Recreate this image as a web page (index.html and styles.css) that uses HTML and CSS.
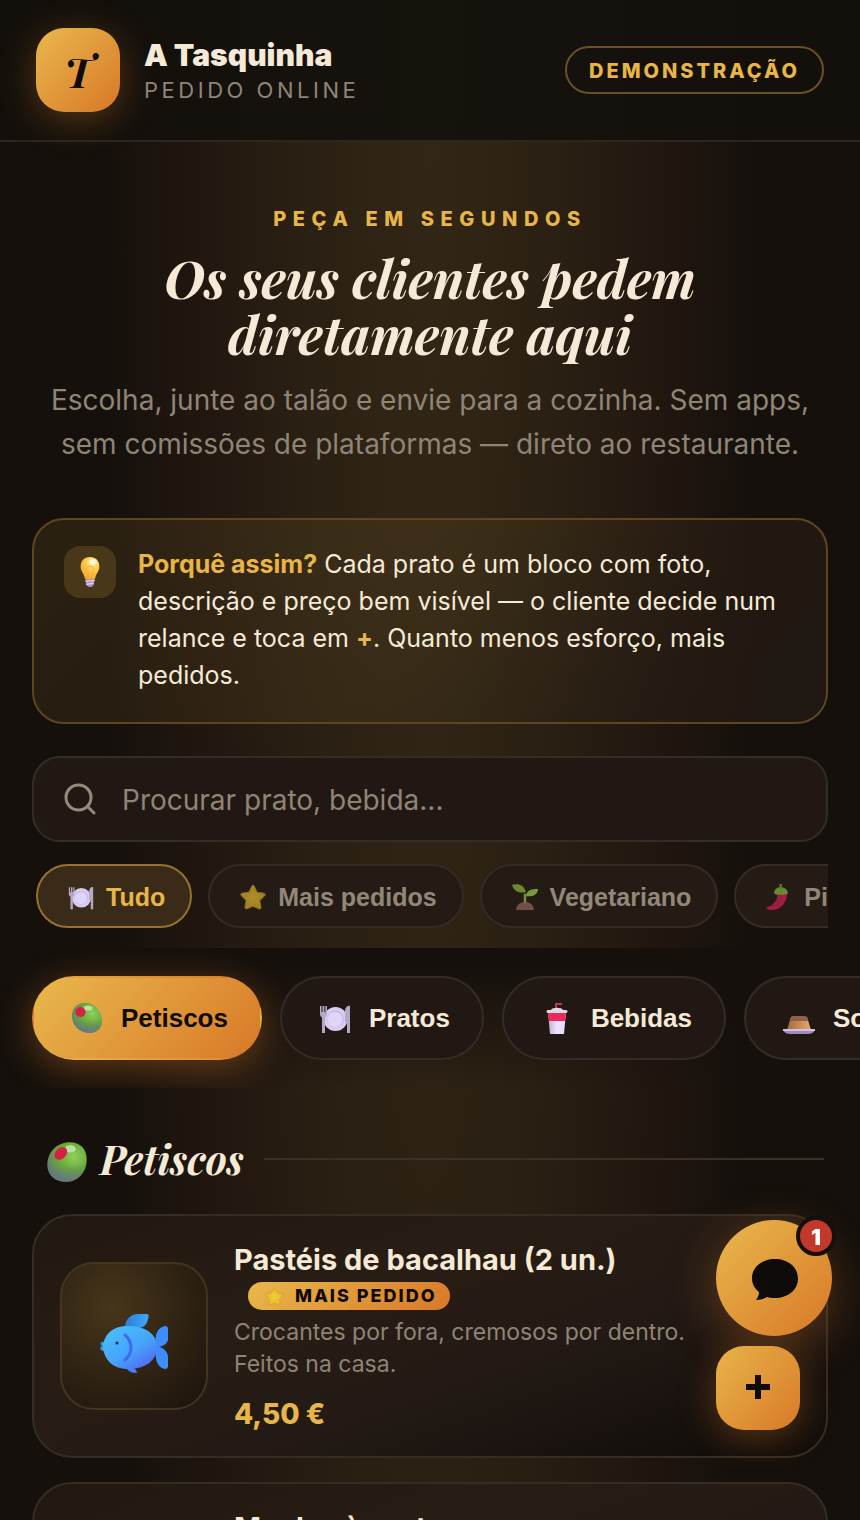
FILE: index.html
```html
<!DOCTYPE html>
<html lang="pt">
<head>
<meta charset="utf-8">
<meta name="viewport" content="width=device-width, initial-scale=1">
<title>A Tasquinha — Pedido online</title>
<link rel="stylesheet" href="styles.css">
</head>
<body>
<svg class="sprite" aria-hidden="true">
  <defs>
    <radialGradient id="g-olive" cx=".68" cy=".36" r=".75"><stop offset="0" stop-color="#8fcf5c"/><stop offset=".5" stop-color="#6aab36"/><stop offset="1" stop-color="#637c70"/></radialGradient>
    <linearGradient id="g-shade" x1="0" y1="0" x2="0" y2="1"><stop offset=".55" stop-color="#64758a" stop-opacity="0"/><stop offset="1" stop-color="#64758a" stop-opacity=".8"/></linearGradient>
    <radialGradient id="g-bulb" cx=".65" cy=".25" r=".8"><stop offset="0" stop-color="#fff3a0"/><stop offset=".5" stop-color="#fdc93f"/><stop offset="1" stop-color="#f59f35"/></radialGradient>
    <linearGradient id="g-fish" x1="0" y1="0" x2=".8" y2="1"><stop offset="0" stop-color="#4cc2fd"/><stop offset=".6" stop-color="#45a4fb"/><stop offset="1" stop-color="#506af2"/></linearGradient>
    <linearGradient id="g-fin" x1="0" y1="0" x2="1" y2="0"><stop offset="0" stop-color="#2a7fd4"/><stop offset="1" stop-color="#3fa8fb"/></linearGradient>
    <linearGradient id="g-cup" x1="0" y1="0" x2="1" y2="0"><stop offset="0" stop-color="#b9aed0"/><stop offset=".5" stop-color="#efe4ff"/><stop offset="1" stop-color="#e4d8fa"/></linearGradient>
    <linearGradient id="g-flan" x1="0" y1="0" x2="1" y2="0"><stop offset="0" stop-color="#a06c3c"/><stop offset="1" stop-color="#eba867"/></linearGradient>
    <radialGradient id="g-star" cx=".5" cy=".5" r=".6"><stop offset="0" stop-color="#f3cd34"/><stop offset="1" stop-color="#e2b32b"/></radialGradient>
  </defs>
  <symbol id="e-olive" viewBox="0 0 32 32">
    <path fill="url(#g-olive)" d="M13 1C23 0 31 8 31 19c0 7-5 12-12 12C9 31 1 24 1 14 1 6 6 1.500 13 1Z"/>
    <path fill="url(#g-shade)" d="M13 1C23 0 31 8 31 19c0 7-5 12-12 12C9 31 1 24 1 14 1 6 6 1.500 13 1Z"/>
    <ellipse cx="17" cy="6" rx="4.500" ry="2.600" fill="#d4ebc0" opacity=".75"/>
    <circle cx="9.500" cy="10" r="5" fill="#d81f45"/>
  </symbol>
  <symbol id="e-olive-tilt" viewBox="0 0 32 32">
    <path fill="url(#g-olive)" d="M18 1C26 1 31 6 31 14 31 24 24 31 15 31 7 31 1 26 1 18 1 8 9 1 18 1Z"/>
    <path fill="url(#g-shade)" d="M18 1C26 1 31 6 31 14 31 24 24 31 15 31 7 31 1 26 1 18 1 8 9 1 18 1Z"/>
    <ellipse cx="18.500" cy="6" rx="4.200" ry="2.800" fill="#d4ebc0" opacity=".75"/>
    <ellipse cx="11.300" cy="9.500" rx="5.500" ry="4" transform="rotate(-45 11.300 9.500)" fill="#d81f45"/>
  </symbol>
  <symbol id="e-plate" viewBox="0 0 32 32">
    <circle cx="16.500" cy="17" r="12" fill="#d9ccf3"/><circle cx="16.500" cy="17" r="8.500" fill="#c9bbe7"/><circle cx="16" cy="17.500" r="7.500" fill="#e0d5f8"/>
    <path fill="#b3a9c4" d="M1 4h1.600v6h1V4h1.800v6h1V4H8v8c0 2-1 3-2 3.500V31H3V15.500C2 15 1 14 1 12Z"/>
    <path fill="#b3a9c4" d="M31 4v27h-3V20h-2V9c0-4 3-6 5-5Z"/>
  </symbol>
  <symbol id="e-star" viewBox="0 0 32 32"><path fill="url(#g-star)" stroke="#cf9d28" stroke-width="1" stroke-linejoin="round" d="M14.500 2.500c.7-1.500 2.300-1.500 3 0l3.600 7.600 8.300 1.200c1.600.2 2.200 2 1 3.200l-6 5.900 1.500 8.200c.3 1.700-1.300 2.800-2.700 2L16 27.500l-7.300 3c-1.400.8-3-.4-2.700-2l1.500-8.200-6-5.900c-1.100-1.100-.5-3 1-3.200l8.400-1.200Z"/></symbol>
  <symbol id="e-sprout" viewBox="0 0 32 32">
    <path fill="#a06b60" d="M5 31c1-6 6-9 11-9s10 3 11 9c0 .6-.4 1-1 1H6c-.6 0-1-.4-1-1Z"/>
    <path d="M16 23V12" stroke="#a3cc4d" stroke-width="3"/>
    <path fill="#92c243" d="M0 1c8-2 15 0 17 9-8 2-15-1-17-9Z"/><path fill="#a6dd5a" d="M32 6c-8 0-14 1-15 9 8 1 15-2 15-9Z"/>
  </symbol>
  <symbol id="e-chili" viewBox="0 0 32 32">
    <path fill="#e81a68" d="M14 12c0 9-5 15-14 17 1 3 7 4 13 2 8-3 13-11 13-20Z"/><path fill="#c02f3f" d="M16 12c1 9-6 17-14 18 12 1 17-7 18-17Z"/>
    <path fill="#92c243" d="M10 12c0-6 4-8 8-8s9 2 9 8c-2 1-4 0-5 1-2 1-4 0-5 0-3 1-5-1-7-1Z"/><path d="M18 5V1" stroke="#7aac38" stroke-width="3" stroke-linecap="round"/>
  </symbol>
  <symbol id="e-cup" viewBox="0 0 32 32">
    <path fill="none" stroke="#c33552" stroke-width="2" d="M15 7V2h6"/>
    <path fill="url(#g-cup)" d="M7 10h18l-2 22H9Z"/><path fill="#f0285a" d="M7 10h18l-1 9H8Z"/>
    <path fill="#dedce2" d="M10 8c1-3 11-3 12 0h3c2 0 2 3 0 3H7c-2 0-2-3 0-3Z"/>
  </symbol>
  <symbol id="e-flan" viewBox="0 0 32 32">
    <path fill="url(#g-flan)" d="M8 15h16l4 13H4Z"/><path fill="#91604c" d="M10 14h12c2 0 3 2 3.300 5H6.700C7 16 8 14 10 14Z"/>
    <path fill="#a08cba" d="M0 28h32c-2 3-4 4-7 4H7c-3 0-5-1-7-4Z"/><path fill="#d2bdec" d="M0 27h32v2H0Z"/>
  </symbol>
  <symbol id="e-bulb" viewBox="0 0 32 32">
    <path fill="#a58dc4" d="M11 23h10l-1 6c-1 4-7 4-8 0Z"/><path d="M11 26l10-1M12 29l8-1" stroke="#ddd0ef" stroke-width="1.500"/>
    <path fill="url(#g-bulb)" d="M16 0c6 0 10 4 10 10 0 5-3 7-4 11-.3 2-1 3-3 3h-6c-2 0-2.700-1-3-3-1-4-4-6-4-11C6 4 10 0 16 0Z"/>
    <path d="M14 23V16c-3-1-3-6 1-6h2c4 0 4 5 1 6v7" fill="none" stroke="#f5a53a" stroke-width="1"/><ellipse cx="19" cy="5" rx="4" ry="3" fill="#fff" opacity=".6"/>
  </symbol>
  <symbol id="e-fish" viewBox="0 0 68 60">
    <path fill="url(#g-fin)" d="M25 14C25 5 31 0 38 0h9c2 0 2 3 1 5-1 6-5 9-10 9Z"/>
    <path fill="#3d8dfc" d="M56 33c-2-13 2-20 9-21 2 0 3 1 3 3v10c0 4-4 7-9 8 5 1 9 5 9 10v9c0 2-1 3-3 3-7-1-11-9-9-22Z"/>
    <path fill="#4a7df6" d="M26 53h8l3 5c0 2-9 1-11-5Z"/>
    <path fill="#2f9ae0" d="M4 28c-4-1-4 3-2 4-3 1-2 5 2 5Z"/>
    <path fill="url(#g-fish)" d="M3 33C4 19 14 12 28 12c16 0 29 7 29 21 0 13-11 22-29 22C13 55 4 46 3 33Z"/>
    <path d="M25 21c8 7 8 18 0 25" fill="none" stroke="#3c6cea" stroke-width="3" stroke-linecap="round"/>
    <circle cx="17" cy="29" r="1.600" fill="#22344f"/>
  </symbol>
</svg>

<header class="topbar">
  <a class="logo" href="#menu" aria-label="A Tasquinha">T</a>
  <div class="brand">
    <strong class="brand-name">A Tasquinha</strong>
    <span class="brand-sub">PEDIDO ONLINE</span>
  </div>
  <span class="demo-tag">DEMONSTRAÇÃO</span>
</header>

<section class="hero">
  <p class="eyebrow">PEÇA EM SEGUNDOS</p>
  <h1 class="hero-title">Os seus clientes pedem diretamente aqui</h1>
  <p class="hero-text">Escolha, junte ao talão e envie para a cozinha. Sem apps, sem comissões de plataformas — direto ao restaurante.</p>
</section>

<div class="tools">
  <aside class="tip">
    <span class="tip-icon"><svg aria-hidden="true"><use href="#e-bulb"/></svg></span>
    <p class="tip-text"><strong>Porquê assim?</strong> Cada prato é um bloco com foto, descrição e preço bem visível — o cliente decide num relance e toca em <strong>+</strong>. Quanto menos esforço, mais pedidos.</p>
  </aside>

  <label class="search">
    <svg class="search-icon" viewBox="0 0 32 32" aria-hidden="true"><circle cx="14.500" cy="14.500" r="12.500"/><path d="M24 24l6 6"/></svg>
    <input class="search-input" type="search" placeholder="Procurar prato, bebida..." aria-label="Procurar prato, bebida">
  </label>

  <div class="filters">
    <button class="filter is-active" type="button"><svg aria-hidden="true"><use href="#e-plate"/></svg>Tudo</button>
    <button class="filter" type="button"><svg aria-hidden="true"><use href="#e-star"/></svg>Mais pedidos</button>
    <button class="filter" type="button"><svg aria-hidden="true"><use href="#e-sprout"/></svg>Vegetariano</button>
    <button class="filter" type="button"><svg aria-hidden="true"><use href="#e-chili"/></svg>Picante</button>
  </div>
</div>

<nav class="categories" aria-label="Categorias">
  <button class="category is-active" type="button"><svg aria-hidden="true"><use href="#e-olive"/></svg>Petiscos</button>
  <button class="category" type="button"><svg aria-hidden="true"><use href="#e-plate"/></svg>Pratos</button>
  <button class="category" type="button"><svg aria-hidden="true"><use href="#e-cup"/></svg>Bebidas</button>
  <button class="category" type="button"><svg aria-hidden="true"><use href="#e-flan"/></svg>Sobremesas</button>
</nav>

<main class="menu" id="menu">
  <h2 class="section-title"><svg aria-hidden="true"><use href="#e-olive-tilt"/></svg>Petiscos</h2>

  <article class="dish">
    <div class="dish-photo"><svg viewBox="0 0 68 60" aria-hidden="true"><use href="#e-fish"/></svg></div>
    <div class="dish-body">
      <h3 class="dish-name">Pastéis de bacalhau (2 un.)</h3>
      <span class="dish-badge"><svg aria-hidden="true"><use href="#e-star"/></svg>MAIS PEDIDO</span>
      <p class="dish-text">Crocantes por fora, cremosos por dentro. Feitos na casa.</p>
      <p class="dish-price">4,50 €</p>
    </div>
    <button class="add" type="button" aria-label="Adicionar Pastéis de bacalhau"><svg viewBox="0 0 24 24" aria-hidden="true"><path d="M12 0v24M0 12h24"/></svg></button>
  </article>

  <article class="dish">
    <div class="dish-photo"></div>
    <div class="dish-body">
      <h3 class="dish-name">Moelas à portuguesa</h3>
    </div>
    <button class="add" type="button" aria-label="Adicionar Moelas à portuguesa"><svg viewBox="0 0 24 24" aria-hidden="true"><path d="M12 0v24M0 12h24"/></svg></button>
  </article>
</main>

<button class="chat" type="button" aria-label="Abrir conversa">
  <svg viewBox="0 0 46 42" aria-hidden="true"><path d="M23 0C36 0 46 8 46 19.500S36 39 23 39c-3 0-6-.4-8-1-3 2-7 3-11 3 2-3 3-5 3-8C3 30 0 25 0 19.500 0 8 10 0 23 0Z"/></svg>
  <span class="chat-count">1</span>
</button>
</body>
</html>
```
FILE: styles.css
```css
:root {
  --bg: #15100c;
  --surface: #211813;
  --cream: #f5ead7;
  --muted: #8f8576;
  --gold: #e8b549;
  --ink: #0f0b08;
  --warm: linear-gradient(135deg, #e9b84c, #d87828);
  --sans: Inter, "Liberation Sans", sans-serif;
  --ui: "Liberation Sans", Arial, sans-serif;
  --serif: "Playfair Display", "Liberation Serif", serif;
}

* { box-sizing: border-box; }

html { scrollbar-width: none; background: var(--bg); }

body {
  margin: 0;
  color: var(--cream);
  font-family: var(--sans);
  background: radial-gradient(ellipse 38% 4000px at 50% 0, #332716 0%, #2a2013 38%, #20160f 75%, var(--bg) 100%);
}

h1, h2, h3, p { margin: 0; }
button { cursor: pointer; }

.sprite { position: absolute; width: 0; height: 0; }

.topbar {
  display: flex;
  align-items: center;
  gap: 24px;
  padding: 28px 36px;
  border-bottom: 2px solid #2b2620;
  background: rgba(20, 16, 12, .92);
}

.logo {
  display: grid;
  place-items: center;
  width: 84px;
  height: 84px;
  padding-top: 4px;
  border-radius: 28px;
  background: var(--warm);
  box-shadow: 0 8px 36px rgba(216, 120, 40, .35);
  color: var(--ink);
  font: italic 700 40px/1 var(--serif);
  text-decoration: none;
}

.brand { display: flex; flex: 1; flex-direction: column; gap: 2px; padding-top: 2px; }
.brand-name { font-size: 30px; line-height: 36px; font-weight: 900; }
.brand-sub { color: var(--muted); font-size: 22px; line-height: 30px; letter-spacing: .16em; }

.demo-tag {
  padding: 11px 22px 9px;
  border: 2px solid #6b5023;
  border-radius: 24px;
  color: var(--gold);
  font-size: 20px;
  line-height: 24px;
  font-weight: 800;
  letter-spacing: 3px;
}

.hero { padding: 64px 36px 52px; text-align: center; }
.eyebrow { color: var(--gold); font-size: 20px; line-height: 26px; font-weight: 800; letter-spacing: .33em; }
.hero-title {
  max-width: 640px;
  margin: 18px auto 16px;
  font: italic 700 52px/56px var(--serif);
}
.hero-text { color: var(--muted); font-size: 28px; line-height: 44px; }

.tools { display: flex; flex-direction: column; padding: 0 32px 20px; }

.tip {
  display: flex;
  gap: 22px;
  margin-bottom: 32px;
  padding: 26px 30px 28px;
  border: 2px solid #5d4620;
  border-radius: 32px;
  background: linear-gradient(135deg, rgba(232, 181, 73, .1), rgba(232, 181, 73, .06) 50%, rgba(33, 24, 19, .9));
}
.tip-icon {
  display: grid;
  flex: none;
  place-items: center;
  width: 52px;
  height: 52px;
  border-radius: 16px;
  background: #49371a;
}
.tip-icon svg { width: 30px; height: 30px; }
.tip-text { flex: 1; font-size: 25px; line-height: 37px; }
.tip-text strong { color: var(--gold); }

.search {
  display: flex;
  align-items: center;
  gap: 26px;
  height: 86px;
  margin-bottom: 22px;
  padding: 0 30px;
  border: 2px solid #342c26;
  border-radius: 28px;
  background: var(--surface);
}
.search-icon { flex: none; width: 32px; height: 32px; fill: none; stroke: #958a7c; stroke-width: 3; stroke-linecap: round; }
.search-input {
  flex: 1;
  min-width: 0;
  padding: 2px 0 0;
  border: 0;
  outline: 0;
  background: none;
  color: var(--cream);
  font: 28px/36px var(--sans);
}
.search-input::placeholder { color: var(--muted); opacity: 1; }

.filters { display: flex; gap: 16px; padding-left: 4px; overflow-x: auto; scrollbar-width: none; }
.filter {
  display: flex;
  flex: none;
  align-items: center;
  gap: 12px;
  height: 64px;
  padding: 2px 25px 0 30px;
  border: 2px solid #352b24;
  border-radius: 32px;
  background: #241b15;
  color: #92887a;
  font: 700 25px/32px var(--ui);
}
.filter svg { width: 26px; height: 26px; opacity: .65; }
.filter.is-active { border-color: #967130; background: #392b17; color: var(--gold); }
.filter.is-active svg { opacity: 1; }

.categories {
  display: flex;
  gap: 18px;
  padding: 28px 32px;
  overflow-x: auto;
  scrollbar-width: none;
  background: linear-gradient(180deg, var(--bg) 10%, rgba(21, 16, 12, 0));
}
.category {
  display: flex;
  flex: none;
  align-items: center;
  gap: 18px;
  height: 84px;
  padding: 0 32px 0 37px;
  border: 2px solid #332b25;
  border-radius: 42px;
  background: var(--surface);
  color: var(--cream);
  font: 700 26px/32px var(--ui);
}
.category svg { width: 32px; height: 32px; }
.category.is-active {
  border-color: transparent;
  background: var(--warm);
  box-shadow: 0 8px 36px rgba(216, 120, 40, .4);
  color: var(--ink);
}

.menu { display: flex; flex-direction: column; gap: 24px; padding: 43px 32px 24px; }

.section-title {
  display: flex;
  align-items: center;
  gap: 12px;
  margin: 0 4px 3px 14px;
  font: italic 700 40px/56px var(--serif);
}
.section-title svg { width: 42px; height: 42px; margin-top: 6px; }
.section-title::after { content: ""; flex: 1; height: 2px; margin-left: 8px; background: #3a3023; }

.dish {
  display: flex;
  align-items: center;
  gap: 26px;
  min-height: 244px;
  padding: 26px;
  border: 2px solid #352c23;
  border-radius: 40px;
  background: linear-gradient(160deg, #21180f, #281d14 35%, #231a15 60%, #0f0b08);
}
.dish-photo {
  display: grid;
  flex: none;
  place-items: center;
  width: 148px;
  height: 148px;
  padding-top: 16px;
  border: 2px solid #43351f;
  border-radius: 34px;
  background: radial-gradient(circle at 35% 30%, #46361a, #2c2012 60%, #1a120c);
}
.dish-photo svg { width: 68px; height: 60px; }
.dish-body { display: flex; flex: 1; flex-direction: column; align-self: flex-start; align-items: flex-start; min-width: 0; }
.dish-name { font-size: 29px; line-height: 36px; font-weight: 700; }
.dish-badge {
  display: flex;
  align-items: center;
  gap: 11px;
  margin: 4px 0 6px 14px;
  padding: 0 13px 0 17px;
  border-radius: 14px;
  background: var(--warm);
  color: var(--ink);
  font-size: 18px;
  line-height: 28px;
  font-weight: 800;
  letter-spacing: 2px;
}
.dish-badge svg { width: 19px; height: 19px; }
.dish-text { color: var(--muted); font-size: 23px; line-height: 32px; }
.dish-price { margin-top: 18px; color: var(--gold); font-size: 28px; line-height: 32px; font-weight: 800; }

.add {
  display: grid;
  flex: none;
  place-items: center;
  align-self: flex-end;
  width: 84px;
  height: 84px;
  padding: 0 0 3px;
  border: 0;
  border-radius: 28px;
  background: var(--warm);
  box-shadow: 0 8px 36px rgba(216, 120, 40, .35);
}
.add svg { width: 24px; height: 24px; stroke: var(--ink); stroke-width: 6; }

.chat {
  position: fixed;
  right: 28px;
  bottom: 184px;
  display: grid;
  place-items: center;
  width: 116px;
  height: 116px;
  padding: 4px 0 0 2px;
  border: 0;
  border-radius: 50%;
  background: var(--warm);
  box-shadow: 0 12px 48px rgba(216, 120, 40, .35);
}
.chat svg { width: 46px; height: 42px; fill: var(--ink); }
.chat-count {
  position: absolute;
  top: -4px;
  right: -4px;
  width: 40px;
  height: 40px;
  border: 4px solid var(--bg);
  border-radius: 50%;
  background: #c1392b;
  color: #fff;
  font: 900 22px/34px var(--sans);
}
```
